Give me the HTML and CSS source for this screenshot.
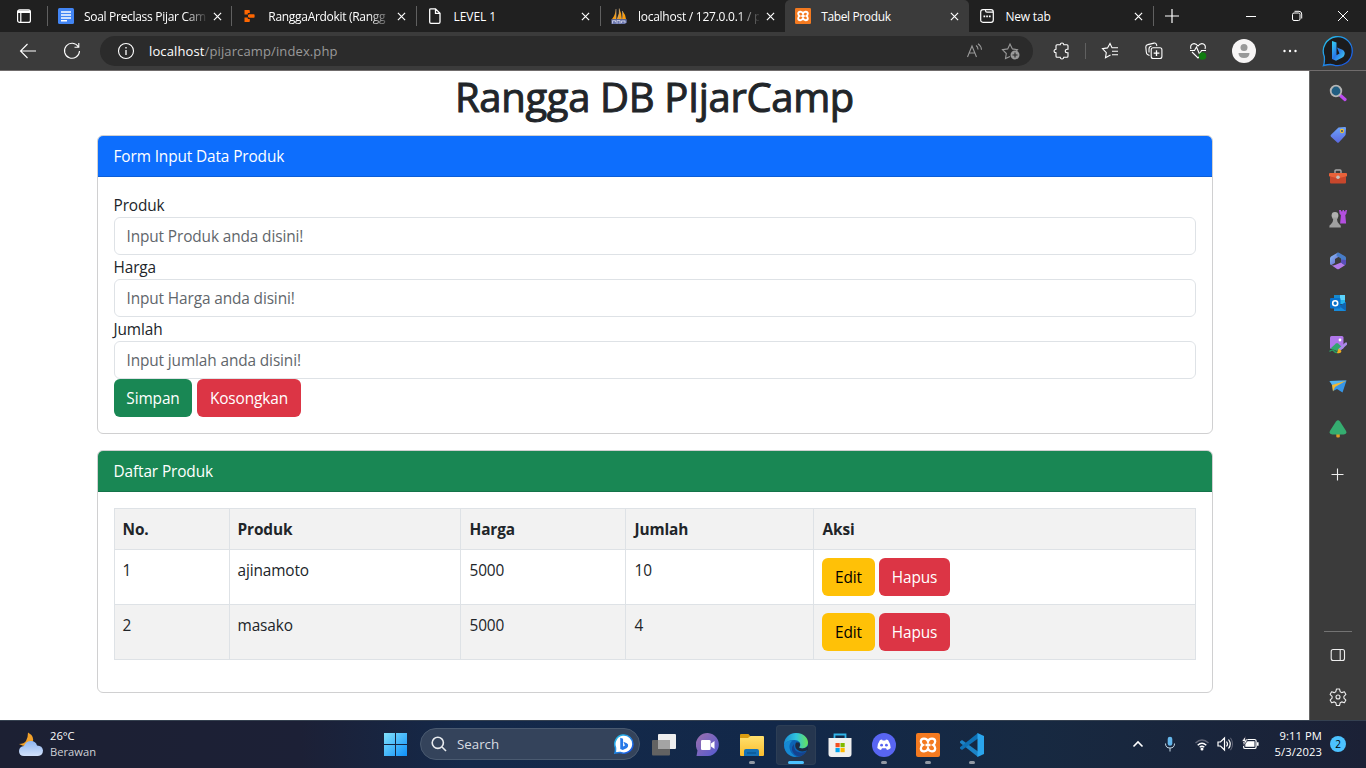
FILE: index.html
```html
<!DOCTYPE html>
<html lang="id">
<head>
<meta charset="utf-8">
<title>Tabel Produk</title>
<link rel="stylesheet" href="styles.css">
</head>
<body>
<div class="desktop">
  <header class="tabstrip">
    <div class="tab-actions"><svg width="16" height="16" viewBox="0 0 16 16" fill="none" stroke="#fff" stroke-width="1.2"><rect x="1.6" y="1.8" width="12.8" height="12.6" rx="2"/><path d="M2 3.2h12M2 4.4h12M4.8 4v10"/></svg></div>
    <div class="tab">
      <svg class="fav" viewBox="0 0 16 16"><rect width="16" height="16" rx="1.5" fill="#4285f4"/><path d="M3 4h10M3 7h10M3 10h10M3 12.8h6" stroke="#fff" stroke-width="1.5"/></svg>
      <span class="tab-title fade t1">Soal Preclass Pijar Cam</span>
      <svg class="close" viewBox="0 0 10 10"><path d="M1 1l8 8M9 1l-8 8"/></svg>
    </div>
    <div class="tab">
      <svg class="fav" viewBox="0 0 16 16" fill="#f60"><path d="M2.500 2h4.500q.8 0 .8.800V5h-2v1.500H2.500zM2.500 9.500h3.300V11h2v2.200q0 .8-.8.800H2.500zM7.300 6.300h4.500q.8 0 .8.800v1.800q0 .8-.8.800H7.300L6 9V7z"/></svg>
      <span class="tab-title fade t2">RanggaArdokit (Rangg</span>
      <svg class="close" viewBox="0 0 10 10"><path d="M1 1l8 8M9 1l-8 8"/></svg>
    </div>
    <div class="tab">
      <svg class="fav" viewBox="0 0 16 16" fill="none" stroke="#fff" stroke-width="1.300"><path d="M4 .8h4.500L13 5.200V14q0 1.300-1.300 1.300H4q-1.300 0-1.300-1.300V2Q2.700.8 4 .8zM8.500 1v4.300H13"/></svg>
      <span class="tab-title t3">LEVEL 1</span>
      <svg class="close" viewBox="0 0 10 10"><path d="M1 1l8 8M9 1l-8 8"/></svg>
    </div>
    <div class="tab">
      <svg class="fav" viewBox="0 0 16 16"><path d="M1 11Q4 8 5 1v10zM5.800 11Q8.500 6 8.300.5q2.500 5 2.200 10.500zM11 11q1.500-4 .5-8 3 3.500 3.500 8z" fill="#f89c0e"/><path d="M5 1v10M8.300.5q.8 5-1.200 10.500M11.500 3q.5 4-1 8" stroke="#b8a58a" stroke-width=".7" fill="none"/><path d="M.3 11.200h15.400v3.500l-2 1.300H.5z" fill="#6c78af"/><path d="M1.500 15.500v-2.800h3v1.500M6 15.500v-3h3v3M10.500 15v-2h3.500v2" stroke="#d5d6ea" stroke-width=".8" fill="none"/></svg>
      <span class="tab-title fade t4">localhost / 127.0.0.1 / p</span>
      <svg class="close" viewBox="0 0 10 10"><path d="M1 1l8 8M9 1l-8 8"/></svg>
    </div>
    <div class="tab active">
      <svg class="fav" viewBox="0 0 24 24"><rect width="24" height="24" rx="2" fill="#f47a20"/><path d="M12 8.500C11 5 5 4.500 4.800 8.500Q5 11 6.800 12 5 13 4.800 15.500C5 19.500 11 19 12 15.500c1 3.500 7 4 7.200 0Q19 13 17.200 12 19 11 19.200 8.500C19 4.500 13 5 12 8.500zM9.500 12h5" fill="none" stroke="#fff" stroke-width="2.800"/></svg>
      <span class="tab-title t5">Tabel Produk</span>
      <svg class="close" viewBox="0 0 10 10"><path d="M1 1l8 8M9 1l-8 8"/></svg>
    </div>
    <div class="tab">
      <svg class="fav" viewBox="0 0 16 16" fill="none" stroke="#fff" stroke-width="1.200"><path d="M4 1.600h8q2.300 0 2.300 2.300v8q0 2.400-2.300 2.400H4q-2.300 0-2.300-2.400V3.900Q1.700 1.600 4 1.600zM6.500 1.600v1q0 1.600 1.500 1.600h6.300"/><path d="M4.500 8.300h1.700M7.200 8.300h1.700M9.900 8.300h1.700" stroke-width="1.700"/></svg>
      <span class="tab-title t6">New tab</span>
      <svg class="close" viewBox="0 0 10 10"><path d="M1 1l8 8M9 1l-8 8"/></svg>
    </div>
    <svg class="new-tab" width="16" height="16" viewBox="0 0 16 16" stroke="#fff" stroke-width="1.200"><path d="M8 1v14M1 8h14"/></svg>
    <div class="window-buttons">
      <svg width="12" height="12" viewBox="0 0 12 12"><path d="M1 6.500h10"/></svg>
      <svg width="12" height="12" viewBox="0 0 12 12"><rect x="1.500" y="3" width="7.500" height="7.500" rx="1.500"/><path d="M3.500 1.300h4.500q2.700 0 2.700 2.700v4.500"/></svg>
      <svg width="12" height="12" viewBox="0 0 12 12"><path d="M1 1l10 10M11 1L1 11"/></svg>
    </div>
  </header>

  <nav class="toolbar">
    <div class="tool"><svg width="18" height="18" viewBox="0 0 18 18"><path d="M17 9H1.500M8.500 2l-7 7 7 7"/></svg></div>
    <div class="tool"><svg width="18" height="18" viewBox="0 0 18 18"><path d="M15.500 5A7.500 7.500 0 1 0 16.500 9M15.800 1v4.300h-4.300"/></svg></div>
    <div class="address">
      <svg width="18" height="18" viewBox="0 0 18 18"><circle cx="9" cy="9" r="7.500"/><path d="M9 8v5M9 5v1.400" stroke-width="1.300"/></svg>
      <span class="url"><b>localhost</b>/pijarcamp/index.php</span>
      <svg class="dim" width="18" height="18" viewBox="0 0 18 18"><path d="M1.500 15L6 4l4.500 11M3.200 11h5.700M10 3.500q2 1.300 2 4M12 1.800q3.200 2 3.500 6"/></svg>
      <svg class="dim star" width="20" height="20" viewBox="0 0 20 20"><path d="M9 15.500l-4.500 2 .8-5-3.800-3.800 5.200-.8L9 3l2.400 4.900 5.100.8-1.500 1.600"/><circle cx="14" cy="14" r="4.500" fill="#999" stroke="none"/><path d="M14 11.500v5M11.500 14h5" stroke="#2b2b2b"/></svg>
    </div>
    <div class="tool puzzle"><svg width="18" height="18" viewBox="0 0 18 18"><path d="M4 2.800h3.200q.2-1.800 1.800-1.800t1.800 1.800H14q1 0 1 1v3.400h-1q-1.800.2-1.800 1.800t1.800 1.800h1v3.500q0 1-1 1h-3.200Q10.600 17 9 17t-1.800-1.700H4q-1 0-1-1v-3.500Q1 10.600 1 9t2-1.800V3.800q0-1 1-1z"/></svg></div>
    <i class="divider"></i>
    <div class="tool fav-tool"><svg width="18" height="18" viewBox="0 0 18 18"><path d="M9.500 13l-5 2.700.8-5-3.800-4 5-.8L9 1.500l2 4.300h6M11 9.300h6M11 12.800h6"/></svg></div>
    <div class="tool"><svg width="18" height="18" viewBox="0 0 18 18"><path d="M4.500 13.500l-2-1Q1.500 12 1.300 10l-.5-5q0-2 2-2.400L9 1.100q2-.4 2.500 1.500l.4 1.400M4 10.500V7q0-2.500 2.500-2.700"/><rect x="6.200" y="5.800" width="10.700" height="10.700" rx="2"/><path d="M11.500 8.300V14M8.700 11.200h5.700" stroke-width="1.300"/></svg></div>
    <div class="tool"><svg width="18" height="18" viewBox="0 0 18 18"><path d="M2 7Q.8 3.500 3.500 2 6.500.8 9 4q2.500-3.200 5.500-2 2.700 1.500 1.500 5M3 10l6 6 2-2M1 8.500h4.500L7.500 5l3 7 2-3.500H17"/><circle cx="13.500" cy="14" r="3.800" fill="#107c10" stroke="none"/></svg></div>
    <div class="tool avatar-tool"><svg width="24" height="24" viewBox="0 0 24 24" stroke="none"><circle cx="12" cy="12" r="12" fill="#f7f5f5"/><circle cx="12" cy="8.500" r="3.500" fill="#999"/><path d="M6.500 14h11q0 5-5.500 5t-5.500-5z" fill="#999"/></svg></div>
    <div class="tool dots-tool"><svg width="18" height="18" viewBox="0 0 18 18" fill="#fff" stroke="none"><circle cx="3.500" cy="9" r="1.200"/><circle cx="9" cy="9" r="1.200"/><circle cx="14.500" cy="9" r="1.200"/></svg></div>
    <div class="tool bing-tool"><svg width="32" height="32" viewBox="0 0 32 32"><defs><linearGradient id="bing-ring" x1="0" y1="0" x2="1" y2="1"><stop stop-color="#28c4e8"/><stop offset="1" stop-color="#174ae4"/></linearGradient><linearGradient id="bing-b" x1="0" y1="0" x2="1" y2="1"><stop stop-color="#35d3f3"/><stop offset=".5" stop-color="#2977e6"/><stop offset="1" stop-color="#45d7f5"/></linearGradient></defs><path d="M1.500 30.500q1.300-3 .8-9A14.500 14.500 0 1 1 11 29.800q-3-.8-9.500.7z" fill="#1b1b1d" stroke="url(#bing-ring)" stroke-width="1.300"/><path d="M10 6l4.500 1.500v13L10 24zM14 20.500l3.500-2-2.500-6 5.500 2.200q3 1.800 2 5-.4 1.800-2.500 3l-6 3-4-1.700z" fill="url(#bing-b)" stroke="none"/></svg></div>
  </nav>

  <div class="window-body">
    <main class="page">
      <div class="container">
        <h1>Rangga DB PIjarCamp</h1>
        <section class="card">
          <div class="card-header primary">Form Input Data Produk</div>
          <form class="card-body">
            <label>Produk</label>
            <input type="text" placeholder="Input Produk anda disini!">
            <label>Harga</label>
            <input type="text" placeholder="Input Harga anda disini!">
            <label>Jumlah</label>
            <input type="text" placeholder="Input jumlah anda disini!">
            <div class="actions"><button class="btn success save" type="button">Simpan</button><button class="btn danger clear" type="button">Kosongkan</button></div>
          </form>
        </section>
        <section class="card list">
          <div class="card-header green">Daftar Produk</div>
          <div class="card-body">
            <table>
              <colgroup><col class="c-no"><col class="c-product"><col class="c-price"><col class="c-count"><col></colgroup>
              <tr class="striped"><th>No.</th><th>Produk</th><th>Harga</th><th>Jumlah</th><th>Aksi</th></tr>
              <tr><td>1</td><td>ajinamoto</td><td>5000</td><td>10</td><td class="cell-actions"><div class="actions row-actions"><button class="btn warning">Edit</button><button class="btn danger del">Hapus</button></div></td></tr>
              <tr class="striped"><td>2</td><td>masako</td><td>5000</td><td>4</td><td class="cell-actions"><div class="actions row-actions"><button class="btn warning">Edit</button><button class="btn danger del">Hapus</button></div></td></tr>
            </table>
          </div>
        </section>
      </div>
    </main>
    <aside class="sidebar">
      <div class="side"><svg viewBox="0 0 18 18"><path d="M11.500 11.500l4.500 4" stroke="#bd4bf0" stroke-width="3.200" stroke-linecap="round"/><circle cx="7" cy="7" r="5.300" fill="#215e82" stroke="#b5b5b5" stroke-width="1.800"/></svg></div>
      <div class="side"><svg viewBox="0 0 18 18"><defs><linearGradient id="tag" x1="0" y1="0" x2="0" y2="1"><stop stop-color="#6da3fb"/><stop offset="1" stop-color="#5b69df"/></linearGradient></defs><path d="M9.500 1.500L16 1q1 0 1 1l-.3 6q0 1-.7 1.700l-6 6.500q-1 1-2 0l-6-5.500q-1-1 0-2z" fill="url(#tag)"/><circle cx="13" cy="5" r="1.600" fill="#395078" stroke="#f2c52d" stroke-width="1.100"/></svg></div>
      <div class="side"><svg viewBox="0 0 18 18"><path d="M6 5V3q0-1 1-1h4q1 0 1 1v2" fill="none" stroke="#aaa" stroke-width="1.400"/><rect x="1" y="8" width="16" height="7.500" rx="1" fill="#c7472c"/><path d="M1 5h16q1 0 1 1v2.300l-9 2-9-2V6q0-1 1-1z" fill="#e8623a"/><circle cx="9" cy="9.300" r="1.800" fill="#c5c2be"/></svg></div>
      <div class="side"><svg viewBox="0 0 18 18"><path d="M10 0h2v1.300h1.500V0h1.500v1.300h1.400V0H18l-.7 4-1 1 .8 8.500h-6l.8-8.500-1.200-1z" fill="#b34fdf"/><circle cx="6" cy="5.500" r="3.400" fill="#b0b0b0"/><path d="M3 7.500h6L8 9.500q0 3 2.500 5 1.400.2 1.400 3H.3q0-2.800 1.400-3Q4.200 12.500 4.200 9.500z" fill="#a0a0a0"/></svg></div>
      <div class="side"><svg viewBox="0 0 18 18"><defs><linearGradient id="m365" x1="0" y1="0" x2="1" y2="1"><stop stop-color="#8bcafa"/><stop offset="1" stop-color="#6454c6"/></linearGradient></defs><path d="M9 .5L2 4.500q-1 .8-1 2v5q0 1.500 1.500 1.500L6 11V7l5-3z" fill="url(#m365)"/><path d="M1.500 12.500L8 17q1 .5 2 0l6-3.800-4-2.700-6 2.500q-2.500 1-4.500-.5z" fill="#b37bea"/><path d="M9 .5q-1.500 1-1.500 3.200L12 6.500v4l4 2.500q1-1 1-2V6q0-1-1-1.700L10 .7z" fill="#477cc7"/><path d="M12 7.500v3l4 2.500q1-1 1-2V8z" fill="#594db9"/></svg></div>
      <div class="side"><svg viewBox="0 0 18 18"><path d="M5 1h11v9H5z" fill="#27b6ed"/><path d="M5 1h6v5H5z" fill="#1689ce"/><path d="M11 1h5v5h-5z" fill="#5bd3fc"/><path d="M5 9l6 3 6-4v9H5z" fill="#168bdc"/><path d="M10 12l7-4v9z" fill="#0f65b2"/><rect x="1" y="4" width="10.500" height="10.500" rx="1" fill="#0871cb"/><circle cx="6.200" cy="9.200" r="2.500" fill="none" stroke="#fff" stroke-width="1.600"/></svg></div>
      <div class="side"><svg viewBox="0 0 18 18"><rect x="1" y="0" width="13.500" height="13" rx="1.500" fill="#b077ea"/><path d="M1.500 12.500L7 7.500q1-.8 2 0l4.500 4L8 15z" fill="#32a66d"/><circle cx="11" cy="4" r="1.400" fill="#fff"/><path d="M.5 15.500q3-2.500 4.500-.5t4 1.500" fill="none" stroke="#2a9c61" stroke-width="1.500"/><path d="M17 7.800L11.300 13" stroke="#a98be8" stroke-width="2.800" stroke-linecap="round"/><path d="M9.500 12.500l3 2.500q-.5 3-4.500 2z" fill="#f2af1e"/></svg></div>
      <div class="side"><svg viewBox="0 0 18 18"><path d="M.5 3L17.500 2.500 13.500 14.500 8 11 4 13 3.500 8z" fill="#3796e7"/><path d="M.5 3l17-.5L3.500 7z" fill="#54b6f2"/><path d="M17.500 2.500L3 7l1 6.500L6 9z" fill="#f5b931"/></svg></div>
      <div class="side"><svg viewBox="0 0 18 18"><rect x="7.300" y="12" width="3.500" height="5.500" rx="1" fill="#e19c25"/><path d="M9 .3q1 0 2 1.200l5.500 8.500q2.500 4-1.700 4.500H3.200q-4.200-.5-1.700-4.500L7 1.500Q8 .3 9 .3z" fill="#35ad70"/></svg></div>
      <div class="side add"><svg class="line" viewBox="0 0 18 18"><path d="M8.500 2.500v12M2.500 8.500h12"/></svg></div>
      <div class="side-bottom">
        <div class="side"><svg class="line" viewBox="0 0 18 18"><rect x="2.200" y="3.500" width="13.300" height="11" rx="2"/><path d="M11.200 3.500v11"/></svg></div>
        <div class="side"><svg class="line" viewBox="0 0 18 18"><path d="M7.500 1h3l.7 2.700 1.500.9 2.700-.8 1.500 2.600-2 2v1.700l2 2-1.500 2.600-2.700-.8-1.500.9-.7 2.700h-3l-.7-2.700-1.500-.9-2.700.8-1.500-2.600 2-2V8.400l-2-2 1.500-2.600 2.700.8 1.500-.9z" stroke-linejoin="round"/><circle cx="9" cy="9" r="2"/></svg></div>
      </div>
    </aside>
  </div>

  <footer class="taskbar">
    <div class="weather">
      <svg width="26" height="26" viewBox="0 0 26 26"><defs><linearGradient id="cloud" x1="0" y1="0" x2="0" y2="1"><stop stop-color="#8fb6f2"/><stop offset="1" stop-color="#d2e1fb"/></linearGradient></defs><path d="M10 .5q7 4 4.500 10Q11 17 1 12q5 0 7-3T10 .5z" fill="#f2a12a"/><path d="M6 24q-5 0-5-5 .3-4.500 5-5 2-5 7-5 4.800 0 6 4.500 5.500.2 6 5-.2 5.300-5 5.500z" fill="url(#cloud)"/></svg>
      <div class="weather-text"><span class="temp">26°C</span><span class="sky">Berawan</span></div>
    </div>
    <div class="task start"><svg width="24" height="24" viewBox="0 0 24 24"><defs><linearGradient id="win" gradientUnits="userSpaceOnUse" x1="0" y1="0" x2="24" y2="24"><stop stop-color="#81e0fa"/><stop offset="1" stop-color="#098dfa"/></linearGradient></defs><path d="M0 0h11v11H0zM12 0h11v11H12zM0 12h11v11H0zM12 12h11v11H12z" fill="url(#win)"/></svg></div>
    <div class="search">
      <svg width="16" height="16" viewBox="0 0 16 16" fill="none" stroke="#e8ebef" stroke-width="1.600"><circle cx="6.800" cy="6.800" r="5.600"/><path d="M11 11l4 4"/></svg>
      <span class="search-text">Search</span>
      <svg width="20" height="20" viewBox="0 0 32 32"><path d="M1.500 30.500q1.300-3 .8-9A14.500 14.500 0 1 1 11 29.800q-3-.8-9.500.7z" fill="#fff" stroke="url(#bing-ring)" stroke-width="2.500"/><path d="M10 6l4.500 1.500v13L10 24zM14 20.500l3.500-2-2.500-6 5.500 2.200q3 1.800 2 5-.4 1.800-2.500 3l-6 3-4-1.700z" fill="#2678e8"/></svg>
    </div>
    <div class="task"><svg width="24" height="24" viewBox="0 0 24 24"><rect x="6" y="1" width="18" height="15" rx="1" fill="#eee"/><rect y="7" width="18" height="15.500" rx="1" fill="#626262"/><path d="M6 7h12v9H6z" fill="#a4a4a4"/></svg></div>
    <div class="task"><svg width="24" height="24" viewBox="0 0 24 24"><defs><linearGradient id="chat" x1="0" y1="0" x2="1" y2="1"><stop stop-color="#9d70ad"/><stop offset="1" stop-color="#5359d1"/></linearGradient></defs><path d="M.5 23l1-5.500A11.500 11.500 0 1 1 12 23z" fill="url(#chat)"/><rect x="5" y="7" width="9.500" height="10" rx="1.200" fill="#fff"/><path d="M15 10.500l3.500-2.500v8L15 13.500z" fill="#fff"/></svg></div>
    <div class="task open"><svg width="24" height="24" viewBox="0 0 24 24"><defs><linearGradient id="folder" x1="0" y1="0" x2="0" y2="1"><stop stop-color="#ffe06e"/><stop offset="1" stop-color="#fbbd2d"/></linearGradient></defs><path d="M0 2q0-1 1-1h7.500l2 2.500L8 6H0z" fill="#d99b10"/><path d="M0 5h8l2.500-2H23q1 0 1 1v18q0 1-1 1H1q-1 0-1-1z" fill="url(#folder)"/><path d="M4 23v-5q0-2 2-2h11q2 0 2 2v5z" fill="#1471b7"/><path d="M7 20h9" stroke="#0b5895" stroke-width="1.500"/></svg></div>
    <div class="task open current"><svg width="24" height="24" viewBox="0 0 24 24"><defs><linearGradient id="edge-a" x1="0" y1="0" x2="1" y2="0"><stop stop-color="#1b8cd0"/><stop offset=".5" stop-color="#2fc2df"/><stop offset="1" stop-color="#66e35b"/></linearGradient></defs><circle cx="12" cy="12" r="12" fill="#0c63b5"/><path d="M0 12C0 4.500 6 0 12 0c7.500 0 12 5 12 9.500 0 6-7 7.500-9 5q2.500-2.500.4-5.500-1.600-2-5-2Q3 7 0 12z" fill="url(#edge-a)"/><path d="M0 12q2.500-5 8.500-4.500Q5 10 5.500 15q1 6 7 9Q1 23.500 0 12z" fill="#1689d2"/><path d="M10 11q-1 7 6 8.500 3.500.5 6.500-1.500-3 4.500-7 5.500-6-1-7.500-6.500Q7.800 13 10 11z" fill="#15428e"/><path d="M12 9.500q-2 4 1 7 4 3.500 9.500 1l1.500-.5v-4q-4 4-9 1.500 2-2.500.4-5z" fill="#1c2b42"/></svg></div>
    <div class="task"><svg width="24" height="24" viewBox="0 0 24 24"><path d="M6.500 6V1.500h11V6" fill="none" stroke="#31b4e8" stroke-width="1.800"/><path d="M.5 5h23v16q0 3-3 3h-17q-3 0-3-3z" fill="#f0f0f0"/><path d="M7.500 10h4.200v4.200H7.500z" fill="#f25022"/><path d="M12.500 10h4.200v4.200h-4.200z" fill="#7fba00"/><path d="M7.500 15h4.200v4.200H7.500z" fill="#00a4ef"/><path d="M12.500 15h4.200v4.200h-4.200z" fill="#ffb900"/></svg></div>
    <div class="task open"><svg width="24" height="24" viewBox="0 0 24 24"><circle cx="12" cy="12" r="12" fill="#5865f2"/><path d="M8 7l2-.5.700 1h2.600l.7-1 2 .5q2.500 3.500 2.700 8-1.500 1.500-3.700 2l-1-1.700h-4l-1 1.700q-2.200-.5-3.700-2Q5.500 10.500 8 7z" fill="#fff"/><circle cx="9.600" cy="12.200" r="1.400" fill="#5865f2"/><circle cx="14.400" cy="12.200" r="1.400" fill="#5865f2"/></svg></div>
    <div class="task open"><svg width="24" height="24" viewBox="0 0 24 24"><rect width="24" height="24" rx="2" fill="#f47a20"/><path d="M12 8.500C11 5 5 4.500 4.800 8.500Q5 11 6.800 12 5 13 4.800 15.500C5 19.500 11 19 12 15.500c1 3.500 7 4 7.200 0Q19 13 17.200 12 19 11 19.200 8.500C19 4.500 13 5 12 8.500zM9.500 12h5" fill="none" stroke="#fff" stroke-width="2.300"/></svg></div>
    <div class="task open"><svg width="24" height="24" viewBox="0 0 24 24"><path d="M0 8.500L2 7l16 11.500V24L0 9.800z" fill="#1c83c6"/><path d="M0 15.500L2 17 18 5.500V0L0 14.200z" fill="#0e71b5"/><path d="M17.500 0L24 3v18l-6.500 3z" fill="#2aa5ed"/></svg></div>
    <div class="tray">
      <svg class="chev" width="12" height="8" viewBox="0 0 12 8"><path d="M1.500 6.500L6 2l4.500 4.500" stroke-width="1.600"/></svg>
      <svg class="mic" width="16" height="16" viewBox="0 0 16 16"><rect x="5.700" y=".8" width="4.600" height="9" rx="2.300" fill="#65b7ec" stroke="none"/><path d="M3.500 7.500q0 4.500 4.500 4.500t4.500-4.500M8 12v3.500" stroke="#c9dce9"/></svg>
      <svg class="wifi" width="16" height="16" viewBox="0 0 16 16"><path d="M1.500 7Q8 1 14.500 7" stroke="#65697a" stroke-width="1.400"/><path d="M3.700 9.200q4.300-4 8.600 0M5.700 11.300q2.300-2 4.600 0" stroke-width="1.500"/><circle cx="8" cy="13" r="1.500" fill="#fff" stroke="none"/></svg>
      <svg class="vol" width="16" height="16" viewBox="0 0 16 16"><path d="M1 6v4h2.500L7.500 14V2L3.500 6zM9.500 5.500q2 2.500 0 5M11.500 3.500q3.500 4.500 0 9" stroke-width="1.200"/><path d="M13.500 1.800q4 6.200 0 12.400" stroke="#65697a"/></svg>
      <svg class="bat" width="18" height="16" viewBox="0 0 18 16"><rect x="2.600" y="3.500" width="12.500" height="9" rx="1.600" stroke-width="1.200"/><rect x="4.300" y="5.200" width="9.200" height="5.600" fill="#fff" stroke="none"/><path d="M16.800 6.200v3.600" stroke-width="1.600"/><path d="M4.800-.3L.5 5.500h2.800L2 10.200 7 4H4.300z" fill="#fff" stroke="#1c2136" stroke-width=".8"/></svg>
      <div class="clock"><span class="time">9:11 PM</span><span class="date">5/3/2023</span></div>
      <span class="badge">2</span>
    </div>
  </footer>
</div>
</body>
</html>
```
FILE: styles.css
```css
* { box-sizing: border-box; }
body { margin: 0; font-family: "Open Sans", "Noto Sans", sans-serif; color: #212529; overflow: hidden; }
svg { display: block; flex: none; }
.desktop { width: 1366px; height: 768px; display: flex; flex-direction: column; background: #fff; }

.tabstrip { height: 32px; background: #202020; display: flex; align-items: center; color: #fff; font-size: 12px; }
.tab-actions { width: 48px; height: 20px; padding: 2px 0 0 16px; border-right: 1px solid #606060; }
.tab { width: 184.3px; height: 20px; padding: 0 10px; display: flex; align-items: center; border-right: 1px solid #606060; }
.tab:nth-child(5) { border-right-color: transparent; }
.tab.active { height: 32px; background: #3b3b3b; border: 0; border-radius: 5px 5px 0 0; }
.fav { width: 16px; height: 16px; margin-right: 10px; }
.tab-title { width: 122px; white-space: nowrap; }
.fade { -webkit-mask-image: linear-gradient(90deg, #000 83%, transparent 102%); mask-image: linear-gradient(90deg, #000 83%, transparent 102%); }
.t1, .t2 { letter-spacing: -.3px; }
.t3 { letter-spacing: -.1px; padding-left: 1px; }
.t4 { letter-spacing: -.25px; padding-left: 1px; }
.t5 { letter-spacing: -.37px; }
.t6 { letter-spacing: -.2px; }
.close { width: 9px; height: 9px; margin-left: 7px; fill: none; stroke: #fff; stroke-width: 1.3; }
.new-tab { margin-left: 10px; }
.window-buttons { display: flex; gap: 34px; margin-left: auto; margin-right: 17px; fill: none; stroke: #fff; stroke-width: 1; }

.toolbar { height: 38px; background: #3b3b3b; display: flex; align-items: center; padding-left: 6px; fill: none; stroke: #fff; stroke-width: 1.1; }
.tool { width: 44px; flex: none; display: flex; justify-content: center; }
.address { width: 933px; height: 30px; margin-left: 6px; border-radius: 15px; background: #2b2b2b; display: flex; align-items: center; padding: 0 12px 0 17px; }
.url { flex: 1; margin-left: 14px; color: #9a9a9a; font-size: 13px; letter-spacing: .12px; }
.url b { font-weight: 400; color: #fff; }
.dim { stroke: #999; }
.star { margin-left: 17px; }
.puzzle { width: 40px; margin-left: 9px; }
.divider { width: 1px; height: 16px; background: #606060; margin: 0 3px; }
.fav-tool { margin-left: -1px; }
.avatar-tool { margin-left: 2px; }
.dots-tool { margin-left: 2px; }
.bing-tool { margin-left: 4px; }

.window-body { height: 650px; display: flex; border-top: 1px solid #706c6c; }
.page { width: 1309px; background: #fff; font-size: 15.4px; line-height: 24px; letter-spacing: -.12px; }
.container { width: 1116px; margin: 0 auto; }
h1 { height: 48px; margin: 0 0 16px; text-align: center; font-size: 40px; line-height: 51px; font-weight: 400; letter-spacing: -.35px; white-space: nowrap; -webkit-text-stroke: 1px #212529; }
.card { border: 1px solid #d0d0d1; border-radius: 6px; overflow: hidden; }
.list { margin-top: 16px; }
.card-header { height: 41px; padding: 9px 16px 7px; color: #fff; }
.primary { background: #0d6efd; border-bottom: 1px solid #0b5ed7; }
.green { background: #198754; border-bottom: 1px solid #15734a; }
.card-body { padding: 16px; }
label { display: block; height: 24px; padding-top: 1px; }
input { display: block; width: 100%; height: 38px; padding: 6px 12px; border: 1px solid #dee2e6; border-radius: 6px; font: 15.4px/24px "Open Sans", sans-serif; letter-spacing: -.12px; color: #212529; background: #fff; }
input::placeholder { color: #61666b; opacity: 1; }
.actions { display: flex; gap: 5px; }
.row-actions { gap: 4px; }
.btn { height: 38px; padding: 2px 0 0 1px; border: 0; border-radius: 6px; color: #fff; font: 15.4px/24px "Open Sans", sans-serif; letter-spacing: -.1px; }
.success { background: #198754; }
.danger { background: #dc3545; }
.warning { background: #ffc107; color: #000; width: 53px; }
.save { width: 78px; }
.clear { width: 104px; }
.del { width: 71px; }
table { width: 1082px; table-layout: fixed; border-collapse: collapse; margin-bottom: 16px; }
.c-no { width: 115px; }
.c-product { width: 231px; }
.c-price { width: 165px; }
.c-count { width: 188px; }
th, td { padding: 9px 8px 7px; border: 1px solid #dee2e6; text-align: left; vertical-align: top; }
th:nth-child(n+3), td:nth-child(3), td:nth-child(4) { padding-left: 9px; }
td.cell-actions { padding: 8px; }
.striped { background: #f2f2f2; }

.sidebar { width: 57px; padding-top: 1px; background: #3b3b3b; border-left: 1px solid #666; display: flex; flex-direction: column; align-items: center; }
.side { height: 42px; display: flex; align-items: center; }
.side svg { width: 18px; height: 18px; }
.side .line { fill: none; stroke: #eee; stroke-width: 1.1; }
.add { height: 50px; }
.side-bottom { width: 28px; margin-top: auto; padding: 2px 0; border-top: 1px solid #737373; display: flex; flex-direction: column; align-items: center; }

.taskbar { height: 48px; display: flex; align-items: center; border-top: 1px solid #354150; background: linear-gradient(90deg, #1c2033 0, #1c2036 22%, #14294a 34%, #122849 58%, #172941 76%, #1b2136 100%); color: #fff; font-size: 11.2px; }
.weather { width: 374px; padding-left: 18px; display: flex; align-items: center; }
.weather-text { display: flex; flex-direction: column; line-height: 16px; margin: -2px 0 0 6px; }
.sky { color: #cfd1d6; }
.task { width: 44px; height: 40px; display: flex; align-items: center; justify-content: center; flex: none; position: relative; }
.open::after { content: ""; position: absolute; left: 19px; bottom: 1px; width: 6px; height: 3px; border-radius: 2px; background: #9199a4; }
.current { width: 40px; margin: 0 2px; border-radius: 4px; background: #25364f; box-shadow: inset 0 0 0 1px #2d3e55; }
.current::after { left: 12px; width: 16px; background: #4cc2ff; }
.search { width: 220px; height: 32px; margin: -1px 2px 0; padding: 0 5px 0 10px; border: 1px solid #4a5a70; border-radius: 16px; background: #34435b; display: flex; align-items: center; font-size: 13.3px; color: #d8dce2; }
.search-text { flex: 1; margin-left: 10px; }
.tray { margin-left: auto; margin-top: -1px; display: flex; align-items: center; padding-right: 20px; fill: none; stroke: #fff; stroke-width: 1; }
.mic { margin-left: 18px; }
.wifi { margin-left: 16px; }
.vol { margin-left: 7px; }
.bat { margin-left: 8px; }
.clock { width: 63px; display: flex; flex-direction: column; text-align: right; line-height: 16px; letter-spacing: .1px; }
.badge { width: 16px; height: 16px; margin-left: 8px; border-radius: 50%; background: #4cc2ff; color: #000; font-size: 10px; line-height: 16px; text-align: center; }
```
